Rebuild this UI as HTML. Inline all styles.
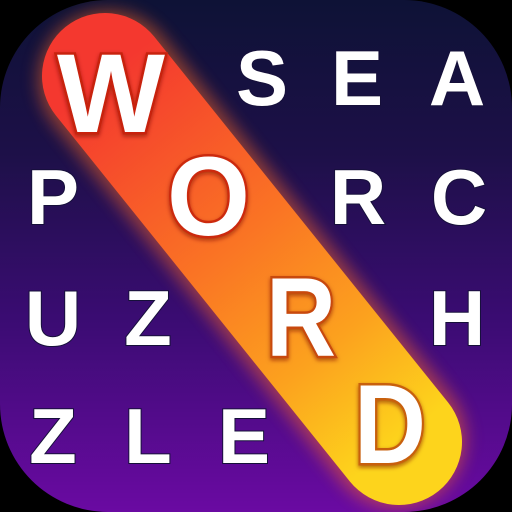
<!DOCTYPE html>
<html><head><style>
html,body{margin:0;padding:0;background:#000;width:512px;height:512px;overflow:hidden}
.icon{position:absolute;left:0;top:0;width:512px;height:512px;border-radius:108px;overflow:hidden;background:linear-gradient(to bottom,#0e1236 0%,#1d1048 30%,#3a0c72 62%,#6a0aa2 100%)}
svg{position:absolute;left:0;top:0}
</style></head><body>
<div class="icon">
<svg width="512" height="512" viewBox="0 0 512 512">
<defs>
<linearGradient id="pg" gradientUnits="userSpaceOnUse" x1="105" y1="76" x2="399" y2="442">
<stop offset="0" stop-color="#f4382f"/>
<stop offset="0.45" stop-color="#fa7424"/>
<stop offset="0.75" stop-color="#fca21e"/>
<stop offset="1" stop-color="#fdd41c"/>
</linearGradient>
<filter id="glow" x="-30%" y="-30%" width="160%" height="160%"><feGaussianBlur stdDeviation="8"/></filter>
<filter id="ts" x="-20%" y="-20%" width="140%" height="140%"><feDropShadow dx="0" dy="2" stdDeviation="2" flood-color="#7a1000" flood-opacity="0.6"/></filter>
</defs>
<g transform="translate(252 259) rotate(51.2)">
<rect x="-300" y="-70" width="600" height="140" rx="70" fill="#ff6a20" opacity="0.5" filter="url(#glow)"/>
</g>
<line x1="105" y1="76" x2="399" y2="442" stroke="url(#pg)" stroke-width="126" stroke-linecap="round"/>
<g font-family="Liberation Sans, sans-serif" font-weight="bold" font-size="78" fill="#fff" stroke="#16103a" stroke-width="2" paint-order="stroke" text-anchor="middle">
<text x="262" y="105">S</text><text x="357" y="105">E</text><text x="457" y="105">A</text>
<text x="53" y="224">P</text><text x="358" y="224">R</text><text x="459" y="224">C</text>
<text x="53" y="345">U</text><text x="148" y="345">Z</text><text x="457" y="345">H</text>
<text x="53" y="463">Z</text><text x="148" y="463">L</text><text x="244" y="463">E</text>
</g>
<g font-family="Liberation Sans, sans-serif" font-weight="bold" font-size="112" fill="#fff" stroke-width="5" paint-order="stroke" filter="url(#ts)" lengthAdjust="spacingAndGlyphs">
<text x="57" y="132" stroke="#c8200f" textLength="108" lengthAdjust="spacingAndGlyphs">W</text>
<text x="167" y="235" stroke="#cc2a10" textLength="83" lengthAdjust="spacingAndGlyphs">O</text>
<text x="266" y="356" stroke="#c84a10" textLength="70" lengthAdjust="spacingAndGlyphs">R</text>
<text x="354" y="463" stroke="#c8600f" textLength="72" lengthAdjust="spacingAndGlyphs">D</text>
</g>
</svg>
</div>
</body></html>
